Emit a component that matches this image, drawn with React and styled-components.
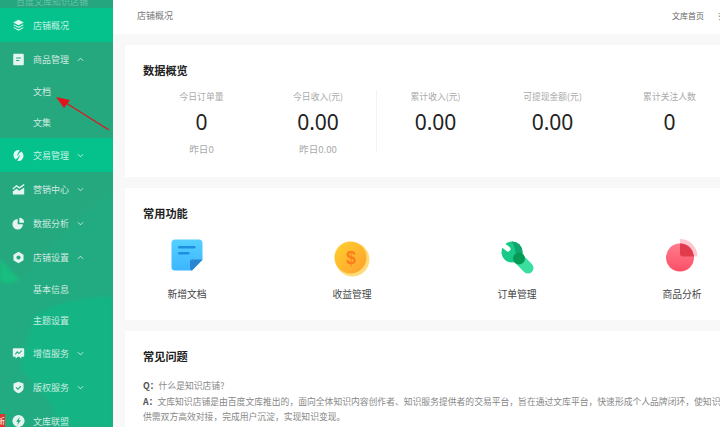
import React from "react";
import styled, { createGlobalStyle } from "styled-components";

const Global = createGlobalStyle`
  html, body { margin: 0; padding: 0; width: 720px; height: 427px; overflow: hidden; background: #f8f8f8; }
  * { box-sizing: border-box; }
  body { font-family: "Noto Sans CJK SC", "Noto Sans", sans-serif; }
`;

const Page = styled.div`
  position: relative;
  display: flex;
  width: 720px;
  height: 427px;
  overflow: hidden;
`;

const Sidebar = styled.aside`
  position: relative;
  flex: none;
  width: 113px;
  height: 427px;
  overflow: hidden;
  background: #26a87f;
`;

const Backdrop = styled.svg`
  position: absolute;
  inset: 0;
  filter: blur(1.5px);
`;

const Brand = styled.div`
  position: relative;
  height: 8px;
  padding-left: 16px;
  overflow: hidden;
  font-size: 9px;
  line-height: 3px;
  color: rgba(255, 255, 255, 0.3);
  white-space: nowrap;
  background: #25a67f;
`;

const Row = styled.div`
  position: relative;
  display: flex;
  align-items: center;
  height: ${(p) => (p.$sub ? 31 : 34)}px;
  padding-left: ${(p) => (p.$sub ? 33 : 12)}px;
  background: ${(p) => (p.$active ? "#05c28d" : "transparent")};
  color: rgba(255, 255, 255, 0.78);
  font-size: 9px;
  white-space: nowrap;
`;

const IconSlot = styled.span`
  display: flex;
  align-items: center;
  justify-content: center;
  flex: none;
  width: 13px;
  height: 13px;
  margin-right: 8px;
`;

const Chevron = styled.svg`
  flex: none;
  width: 7px;
  height: 5px;
  margin-left: 8px;
`;

const Badge = styled.span`
  position: absolute;
  left: 0;
  top: 10px;
  width: 5px;
  height: 13px;
  overflow: hidden;
  background: #e2332c;
  color: #fff;
  font-size: 8px;
  line-height: 13px;
  direction: rtl;
`;

const Arrow = styled.svg`
  position: absolute;
  left: 0;
  top: 0;
  pointer-events: none;
`;

const Main = styled.main`
  flex: none;
  width: 800px;
  background: #f8f8f8;
`;

const Header = styled.header`
  display: flex;
  align-items: center;
  justify-content: space-between;
  height: 34px;
  padding: 0 113px 4px 24px;
  background: #fff;
  font-size: 9px;
  color: #777;
`;

const HeaderLinks = styled.nav`
  display: flex;
  gap: 14px;
  width: 128px;
  font-size: 8px;
  color: #666;
  white-space: nowrap;
`;

const Content = styled.div`
  display: flex;
  flex-direction: column;
  gap: 11px;
  padding: 11px 0 0 12px;
`;

const Card = styled.section`
  height: 132px;
  padding: 17px 0 0 18px;
  background: #fff;
`;

const Title = styled.h2`
  margin: 0;
  font-size: 11.2px;
  line-height: 16px;
  font-weight: 700;
  color: #222;
`;

const Stats = styled.div`
  display: flex;
  margin-top: 12px;
`;

const Stat = styled.div`
  flex: none;
  width: 117px;
  height: 62px;
  text-align: center;
  border-right: ${(p) => (p.$divided ? "1px solid #f3f3f3" : "none")};
`;

const StatLabel = styled.div`
  margin-top: 0;
  font-size: 8.8px;
  line-height: 14px;
  color: #aaa;
  white-space: nowrap;
`;

const StatValue = styled.div`
  margin-top: 5px;
  font-family: "Noto Sans", sans-serif;
  font-size: 21px;
  line-height: 26px;
  color: #222;
`;

const StatSub = styled.div`
  margin-top: 7px;
  font-size: 9.6px;
  line-height: 14px;
  color: #aaa;
`;

const Features = styled.div`
  display: flex;
  gap: 77px;
  margin-top: 15px;
`;

const Feature = styled.div`
  display: flex;
  flex-direction: column;
  align-items: center;
  flex: none;
  width: 88px;
`;

const FeatureIcon = styled.div`
  display: flex;
  align-items: center;
  justify-content: center;
  height: 42px;
  padding-bottom: ${(p) => (p.$lift > 0 ? p.$lift : 0)}px;
  padding-top: ${(p) => (p.$lift < 0 ? -p.$lift : 0)}px;
`;

const FeatureLabel = styled.div`
  margin-top: 9px;
  font-size: 9.8px;
  line-height: 14px;
  color: #444;
  white-space: nowrap;
`;

const Faq = styled.div`
  margin-top: 14px;
  font-size: 8.8px;
  line-height: 15.5px;
  color: #888;
  white-space: nowrap;
`;

const FaqLine = styled.div``;

const FaqMark = styled.b`
  font-weight: 700;
  color: #555;
`;

const W = { fill: "#fff", opacity: 0.88 };

const Icons = {
  layers: (
    <svg width="13" height="13" viewBox="0 0 16 16">
      <path {...W} d="M8 1l6.5 3.2L8 7.6 1.5 4.2z" />
      <path {...W} d="M2.6 6.8L8 9.6l5.4-2.8 1.1.6L8 11 1.5 7.4z" />
      <path {...W} d="M2.6 10L8 12.8l5.4-2.8 1.1.7L8 14.4l-6.5-3.7z" />
    </svg>
  ),
  doc: (
    <svg width="13" height="13" viewBox="0 0 16 16">
      <path {...W} fillRule="evenodd" d="M2.5 1h11a1 1 0 011 1v12a1 1 0 01-1 1h-11a1 1 0 01-1-1V2a1 1 0 011-1zM5 5.5v1.3h6V5.5zM5 8.5v1.3h4V8.5z" />
    </svg>
  ),
  trade: (
    <svg width="13" height="13" viewBox="0 0 16 16">
      <path {...W} d="M9.5 1.2L6 8h3l-1.6 2.6L4.6 13A6.5 6.5 0 014.2 2.6 6.5 6.5 0 019.5 1.2z" />
      <path {...W} d="M6.5 14.8L10 8H7l1.6-2.6L11.4 3a6.5 6.5 0 01.4 10.4 6.5 6.5 0 01-5.3 1.4z" />
    </svg>
  ),
  market: (
    <svg width="13" height="13" viewBox="0 0 16 16">
      <path {...W} d="M1 14V10.5L5.500 7l3.500 2.500L15 5.500V14z" />
      <path d="M1 7.500L5.500 3.500 9 6l6-4" fill="none" stroke="#fff" strokeOpacity=".88" strokeWidth="1.700" />
    </svg>
  ),
  pie: (
    <svg width="13" height="13" viewBox="0 0 16 16">
      <path {...W} d="M7 2.500V9h6.500A6.500 6.500 0 117 2.500z" />
      <path {...W} d="M9 1a6 6 0 016 6H9z" />
    </svg>
  ),
  hex: (
    <svg width="13" height="13" viewBox="0 0 16 16">
      <path {...W} fillRule="evenodd" d="M8 1l6.200 3.500v7L8 15l-6.200-3.500v-7zM8 5.400a2.600 2.600 0 100 5.200 2.600 2.600 0 000-5.200z" />
    </svg>
  ),
  chat: (
    <svg width="13" height="13" viewBox="0 0 16 16">
      <path {...W} d="M2 1.500h12a1 1 0 011 1V11a1 1 0 01-1 1h-2.500v2.500L9 12H7l-2.500 2.500V12H2a1 1 0 01-1-1V2.500a1 1 0 011-1z" />
      <path d="M4 9l2.500-3 2 2L12 4.500" fill="none" stroke="#26a87f" strokeWidth="1.300" />
    </svg>
  ),
  shield: (
    <svg width="13" height="13" viewBox="0 0 16 16">
      <path {...W} d="M8 .8l6.200 2.200v6c0 3-3 5-6.200 6.200C4.800 14 1.800 12 1.800 9V3z" />
      <path d="M5 7.800l2.300 2.200L11 6.300" fill="none" stroke="#26a87f" strokeWidth="1.500" />
    </svg>
  ),
  bolt: (
    <svg width="14" height="14" viewBox="0 0 16 16">
      <path {...W} fillRule="evenodd" d="M8 .5a7.500 7.500 0 110 15 7.500 7.500 0 010-15zM9.500 3L5 9h2.500L6.500 13 11 7H8.500z" />
    </svg>
  ),
};

const Up = () => (
  <Chevron viewBox="0 0 8 5">
    <path d="M1 4l3-3 3 3" fill="none" stroke="#fff" strokeOpacity=".8" strokeWidth="1" />
  </Chevron>
);
const Down = () => (
  <Chevron viewBox="0 0 8 5">
    <path d="M1 1l3 3 3-3" fill="none" stroke="#fff" strokeOpacity=".8" strokeWidth="1" />
  </Chevron>
);

const menu = [
  { label: "店铺概况", icon: "layers", active: true },
  { label: "商品管理", icon: "doc", open: true },
  { label: "文档", sub: true },
  { label: "文集", sub: true },
  { label: "交易管理", icon: "trade", closed: true, active: true },
  { label: "营销中心", icon: "market", closed: true },
  { label: "数据分析", icon: "pie", closed: true },
  { label: "店铺设置", icon: "hex", open: true },
  { label: "基本信息", sub: true },
  { label: "主题设置", sub: true },
  { label: "增值服务", icon: "chat", closed: true },
  { label: "版权服务", icon: "shield", closed: true },
  { label: "文库联盟", icon: "bolt", badge: true },
];

const stats = [
  { label: "今日订单量", value: "0", sub: "昨日0" },
  { label: "今日收入(元)", value: "0.00", sub: "昨日0.00", divided: true },
  { label: "累计收入(元)", value: "0.00" },
  { label: "可提现金额(元)", value: "0.00" },
  { label: "累计关注人数", value: "0" },
];

const NoteIcon = () => (
  <svg width="32" height="32" viewBox="0 0 32 32">
    <defs>
      <linearGradient id="note" x1="0" y1="0" x2="0" y2="1">
        <stop offset="0" stopColor="#55d0ff" />
        <stop offset="1" stopColor="#3cb6ff" />
      </linearGradient>
    </defs>
    <path d="M4 .5h24a3.500 3.500 0 013.500 3.500v17L21 31.500H4A3.500 3.500 0 01.500 28V4A3.500 3.500 0 014 .5z" fill="url(#note)" />
    <path d="M31.500 20.500L21 31.500c-1.200-.2-1.800-.8-2-2v-7c0-1.200.8-2 2-2z" fill="#2a86cf" />
    <rect x="7" y="7" width="17.500" height="2.600" rx="1.300" fill="#1e8fe0" />
    <rect x="7" y="13" width="11.500" height="2.600" rx="1.300" fill="#1e8fe0" />
  </svg>
);

const CoinIcon = () => (
  <svg width="36" height="36" viewBox="0 0 36 36">
    <defs>
      <linearGradient id="coin" x1="0" y1="0" x2="1" y2="1">
        <stop offset="0" stopColor="#ffd12e" />
        <stop offset="1" stopColor="#ff9f2e" />
      </linearGradient>
    </defs>
    <circle cx="18.500" cy="18.500" r="17" fill="#ffdc7a" />
    <circle cx="16.500" cy="16.500" r="16" fill="url(#coin)" />
    <text x="17" y="23" textAnchor="middle" fontFamily="Liberation Sans" fontWeight="700" fontSize="18" fill="#fb7d1e">$</text>
  </svg>
);

const WrenchIcon = () => (
  <svg width="33" height="33" viewBox="0 0 33 33">
    <defs>
      <clipPath id="head">
        <circle cx="11" cy="11" r="10.500" />
      </clipPath>
    </defs>
    <line x1="18" y1="18" x2="27" y2="27" stroke="#3ade9f" strokeWidth="11" strokeLinecap="round" />
    <circle cx="11" cy="11" r="10.500" fill="#19c987" />
    <path d="M10 -1H24V22H15C16 14 14 5 10 -1z" fill="#0fa56c" clipPath="url(#head)" />
    <line x1="-2" y1="1" x2="7" y2="8" stroke="#fff" strokeWidth="5" strokeLinecap="round" />
    <circle cx="18" cy="17.500" r="6" fill="#079a56" />
  </svg>
);

const PieIcon = () => (
  <svg width="33" height="34" viewBox="0 0 33 34">
    <defs>
      <linearGradient id="pie" x1="0" y1="0" x2="0" y2="1">
        <stop offset="0" stopColor="#ff7c8c" />
        <stop offset="1" stopColor="#fc4f67" />
      </linearGradient>
      <clipPath id="disc">
        <circle cx="14" cy="19.500" r="14" />
      </clipPath>
    </defs>
    <path d="M14 1A17.500 17.500 0 0131.500 18.500H17a3 3 0 01-3-3z" fill="#ffc8d0" />
    <circle cx="14" cy="19.500" r="14" fill="url(#pie)" />
    <path d="M14 1A17.500 17.500 0 0131.500 18.500H17a3 3 0 01-3-3z" fill="#e03c4c" clipPath="url(#disc)" />
  </svg>
);

const features = [
  { label: "新增文档", Icon: NoteIcon, lift: 4 },
  { label: "收益管理", Icon: CoinIcon, lift: -3 },
  { label: "订单管理", Icon: WrenchIcon, lift: 0 },
  { label: "商品分析", Icon: PieIcon, lift: 4 },
];

export default function App() {
  return (
    <Page>
      <Global />
      <Sidebar>
        <Backdrop width="113" height="427" viewBox="0 0 113 427">
          <path d="M113 190C85 215 60 232 35 265 20 285 8 285 0 280V427H113z" fill="#22ab80" />
          <path d="M0 258C8 268 14 275 20 279 12 284 5 284 0 281z" fill="#18bd7f" />
          <path d="M113 296C75 298 42 306 33 320L20 368 50 402 60 427H113z" fill="#14b485" />
        </Backdrop>
        <Brand>百度文库知识店铺</Brand>
        {menu.map((m) => (
          <Row key={m.label} $sub={m.sub} $active={m.active}>
            {m.badge && <Badge>新</Badge>}
            {m.icon && <IconSlot>{Icons[m.icon]}</IconSlot>}
            {m.label}
            {m.open && <Up />}
            {m.closed && <Down />}
          </Row>
        ))}
      </Sidebar>
      <Main>
        <Header>
          <span>店铺概况</span>
          <HeaderLinks>
            <span>文库首页</span>
            <span>充值中心</span>
          </HeaderLinks>
        </Header>
        <Content>
          <Card>
            <Title>数据概览</Title>
            <Stats>
              {stats.map((s) => (
                <Stat key={s.label} $divided={s.divided}>
                  <StatLabel>{s.label}</StatLabel>
                  <StatValue>{s.value}</StatValue>
                  {s.sub && <StatSub>{s.sub}</StatSub>}
                </Stat>
              ))}
            </Stats>
          </Card>
          <Card>
            <Title>常用功能</Title>
            <Features>
              {features.map(({ label, Icon, lift }) => (
                <Feature key={label}>
                  <FeatureIcon $lift={lift}>
                    <Icon />
                  </FeatureIcon>
                  <FeatureLabel>{label}</FeatureLabel>
                </Feature>
              ))}
            </Features>
          </Card>
          <Card>
            <Title>常见问题</Title>
            <Faq>
              <FaqLine>
                <FaqMark>Q：</FaqMark>什么是知识店铺?
              </FaqLine>
              <FaqLine>
                <FaqMark>A：</FaqMark>
                文库知识店铺是由百度文库推出的，面向全体知识内容创作者、知识服务提供者的交易平台，旨在通过文库平台，快速形成个人品牌闭环，使知识
              </FaqLine>
              <FaqLine>供需双方高效对接，完成用户沉淀，实现知识变现。</FaqLine>
            </Faq>
          </Card>
        </Content>
      </Main>
      <Arrow width="120" height="140" viewBox="0 0 120 140">
        <path d="M109 130L66 103" stroke="#e3141c" strokeWidth="1.300" fill="none" />
        <path d="M56 97L70 100 64 108z" fill="#e3141c" />
      </Arrow>
    </Page>
  );
}
